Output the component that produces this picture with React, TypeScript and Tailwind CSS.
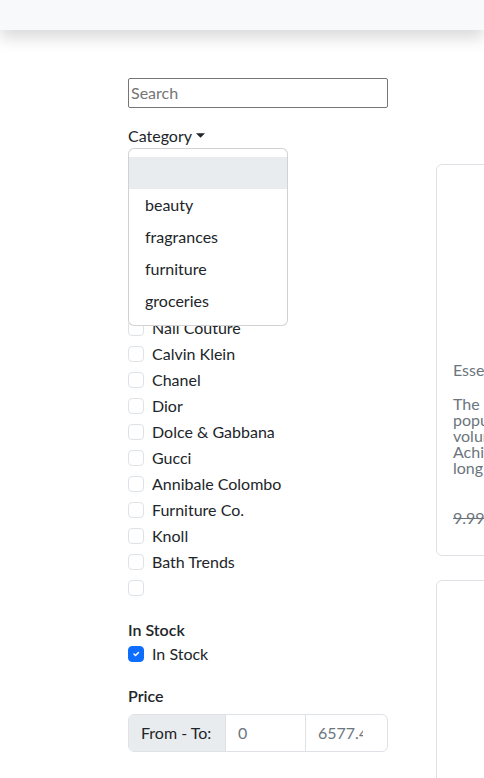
import React from "react";

const brands = [
  "All",
  "Essence",
  "Glamour Beauty",
  "Velvet Touch",
  "Chic Cosmetics",
  "Nail Couture",
  "Calvin Klein",
  "Chanel",
  "Dior",
  "Dolce & Gabbana",
  "Gucci",
  "Annibale Colombo",
  "Furniture Co.",
  "Knoll",
  "Bath Trends",
  "",
];

function Check({ checked = false }: { checked?: boolean }) {
  return checked ? (
    <span className="w-4 h-4 rounded-[4px] bg-[#0d6efd] border border-[#0d6efd] flex items-center justify-center shrink-0">
      <svg width="10" height="10" viewBox="0 0 20 20">
        <path d="M6 10l3 3l6-6" fill="none" stroke="#fff" strokeWidth="3" strokeLinecap="round" strokeLinejoin="round" />
      </svg>
    </span>
  ) : (
    <span className="w-4 h-4 rounded-[4px] bg-white border border-[#dee2e6] shrink-0" />
  );
}

export default function App() {
  return (
    <div
      className="w-[484px] h-[778px] overflow-hidden bg-white text-[#212529] text-[16px]"
      style={{ fontFamily: "Lato, 'Noto Sans', sans-serif" }}
    >
      <div className="h-[30px] bg-[#f8f9fa] shadow-[0_8px_16px_rgba(0,0,0,0.15)] relative z-10" />
      <div className="flex gap-[48px] pl-[128px] pt-[48px]">
        <div className="w-[260px] shrink-0 flex flex-col">
          <div className="h-[30px] border border-[#767676] rounded-[2px] flex items-center px-[2px] text-[#757575]">
            Search
          </div>
          <div className="relative mt-[16px]">
            <div className="h-[24px] flex items-center gap-[4px] leading-6">
              Category
              <svg width="9" height="6" viewBox="0 0 10 6">
                <path d="M0 0h10L5 5z" fill="#212529" />
              </svg>
            </div>
            <div className="absolute left-0 top-[24px] w-[160px] z-20 bg-white border border-[rgba(0,0,0,0.175)] rounded-[6px] py-[8px]">
              <div className="h-[32px] bg-[#e9ecef]" />
              {["beauty", "fragrances", "furniture", "groceries"].map((c) => (
                <div key={c} className="h-[32px] px-[16px] flex items-center">
                  {c}
                </div>
              ))}
            </div>
          </div>
          <div className="mt-[14px] font-semibold leading-6">Brand</div>
          <div className="flex flex-col">
            {brands.map((b, i) => (
              <div key={i} className="h-[24px] mb-[2px] flex items-center gap-[8px] leading-6">
                <Check />
                <span>{b}</span>
              </div>
            ))}
          </div>
          <div className="mt-[16px] font-semibold leading-6">In Stock</div>
          <div className="h-[24px] flex items-center gap-[8px]">
            <Check checked />
            <span>In Stock</span>
          </div>
          <div className="mt-[18px] font-semibold leading-6">Price</div>
          <div className="mt-[6px] h-[38px] flex border border-[#dee2e6] rounded-[6px] overflow-hidden">
            <div className="w-[97px] shrink-0 whitespace-nowrap bg-[#e9ecef] border-r border-[#dee2e6] flex items-center px-[12px]">
              From - To:
            </div>
            <div className="w-[80px] shrink-0 border-r border-[#dee2e6] flex items-center px-[12px] text-[#6c757d]">
              0
            </div>
            <div className="flex-1 min-w-0 flex items-center pl-[12px] pr-[24px] text-[#6c757d]">
              <span className="block overflow-hidden whitespace-nowrap w-full">6577.44</span>
            </div>
          </div>
        </div>
        <div className="flex flex-col gap-[24px] pt-[86px] shrink-0">
          <div className="w-[240px] h-[392px] border border-[#dee2e6] rounded-[6px] flex flex-col px-[16px]">
            <div className="mt-[193px] text-[#6c757d] leading-6">Essence Mascara</div>
            <div className="mt-[14px] text-[#6c757d] leading-[16px]">
              The
              <br />
              popular
              <br />
              volumizing
              <br />
              Achieve
              <br />
              long
            </div>
            <div className="mt-[30px] text-[#6c757d] line-through leading-6">9.99</div>
          </div>
          <div className="w-[240px] h-[300px] border border-[#dee2e6] rounded-[6px]" />
        </div>
      </div>
    </div>
  );
}
